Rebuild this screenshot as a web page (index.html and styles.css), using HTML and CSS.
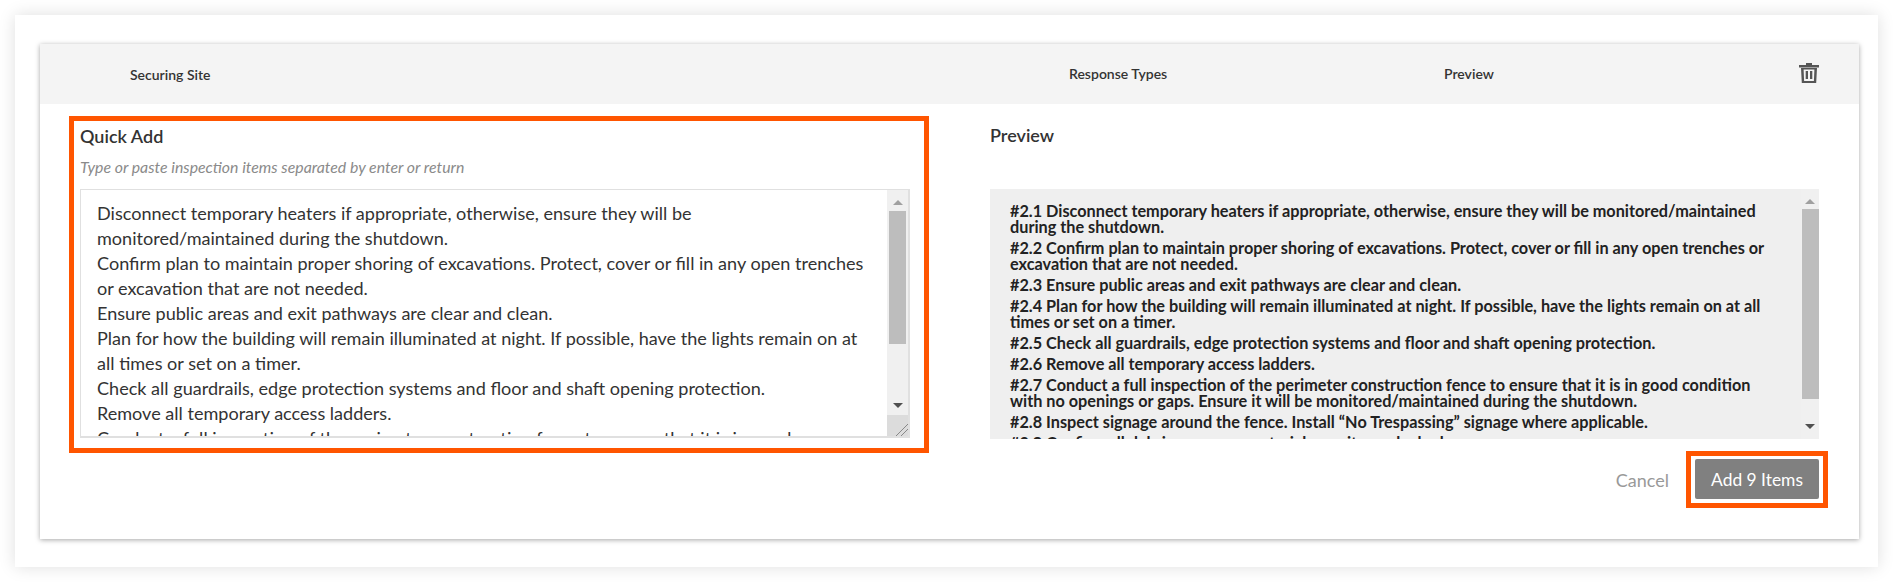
FILE: index.html
```html
<!DOCTYPE html>
<html lang="en">
<head>
<meta charset="utf-8">
<title>Quick Add</title>
<link rel="stylesheet" href="styles.css">
</head>
<body>
<main class="sheet">
  <section class="card">
    <header class="card-head">
      <span class="head-name">Securing Site</span>
      <span class="head-types">Response Types</span>
      <span class="head-preview">Preview</span>
      <svg class="trash" viewBox="0 0 20 20" aria-hidden="true">
        <path fill-rule="evenodd" d="M7 0h6v2h7v2.500H0V2h7zM2 5h16l-.8 15H2.800zM4.600 6.500l.5 11.500h9.800l.5-11.500z"/>
        <rect x="6.700" y="8" width="2.300" height="8"/>
        <rect x="11" y="8" width="2.300" height="8"/>
      </svg>
    </header>
    <div class="card-body">
      <div class="col-left">
        <div class="callout">
          <h2 class="title">Quick Add</h2>
          <p class="hint">Type or paste inspection items separated by enter or return</p>
          <div class="field">
            <div class="field-text">
              <p>Disconnect temporary heaters if appropriate, otherwise, ensure they will be monitored/maintained during the shutdown.</p>
              <p>Confirm plan to maintain proper shoring of excavations. Protect, cover or fill in any open trenches or excavation that are not needed.</p>
              <p>Ensure public areas and exit pathways are clear and clean.</p>
              <p>Plan for how the building will remain illuminated at night. If possible, have the lights remain on at all times or set on a timer.</p>
              <p>Check all guardrails, edge protection systems and floor and shaft opening protection.</p>
              <p>Remove all temporary access ladders.</p>
              <p>Conduct a full inspection of the perimeter construction fence to ensure that it is in good condition with no openings or gaps.</p>
            </div>
            <div class="scroll scroll-field">
              <span class="arrow-up"></span>
              <span class="thumb thumb-field"></span>
              <span class="arrow-down"></span>
            </div>
            <div class="resizer"></div>
          </div>
        </div>
      </div>
      <div class="col-right">
        <h2 class="title title-right">Preview</h2>
        <div class="preview">
          <div class="preview-text">
            <p>#2.1 Disconnect temporary heaters if appropriate, otherwise, ensure they will be monitored/maintained during the shutdown.</p>
            <p>#2.2 Confirm plan to maintain proper shoring of excavations. Protect, cover or fill in any open trenches or excavation that are not needed.</p>
            <p>#2.3 Ensure public areas and exit pathways are clear and clean.</p>
            <p>#2.4 Plan for how the building will remain illuminated at night. If possible, have the lights remain on at all times or set on a timer.</p>
            <p>#2.5 Check all guardrails, edge protection systems and floor and shaft opening protection.</p>
            <p>#2.6 Remove all temporary access ladders.</p>
            <p>#2.7 Conduct a full inspection of the perimeter construction fence to ensure that it is in good condition with no openings or gaps. Ensure it will be monitored/maintained during the shutdown.</p>
            <p>#2.8 Inspect signage around the fence. Install “No Trespassing” signage where applicable.</p>
            <p>#2.9 Confirm all debris or excess materials on site are locked.</p>
          </div>
          <div class="scroll scroll-preview">
            <span class="arrow-up"></span>
            <span class="thumb thumb-preview"></span>
            <span class="arrow-down"></span>
          </div>
        </div>
        <div class="actions">
          <span class="cancel">Cancel</span>
          <div class="callout-btn"><button class="add" type="button">Add 9 Items</button></div>
        </div>
      </div>
    </div>
  </section>
</main>
</body>
</html>
```
FILE: styles.css
```css
* { box-sizing: border-box; }
html, body { margin: 0; background: #fff; }
body {
  width: 1893px;
  height: 582px;
  padding: 15px;
  overflow: hidden;
  font-family: Lato, "Liberation Sans", sans-serif;
  color: #222;
}
.sheet {
  width: 1863px;
  height: 552px;
  padding: 29px 19px 0 25px;
  background: #fff;
  box-shadow: 0 0 16px rgba(0, 0, 0, .13);
}
.card {
  width: 1819px;
  height: 495px;
  background: #fff;
  box-shadow: 0 1px 5px rgba(0, 0, 0, .35);
}
.card-head {
  display: grid;
  grid-template-columns: 939px 375px 355px 20px;
  align-items: center;
  height: 60px;
  padding-left: 90px;
  background: #f4f4f4;
  font-size: 14px;
  font-weight: 600;
  color: #333;
}
.head-types, .head-preview { margin-top: -1px; }
.trash { width: 20px; height: 20px; fill: #555; margin-top: -2px; }
.card-body { display: flex; }
.col-left { width: 950px; padding: 12px 0 0 29px; }
.callout {
  width: 860px;
  height: 337px;
  padding: 0 0 0 6px;
  border: 5px solid #ff5500;
}
.title {
  margin: 0;
  padding-top: 4px;
  font-size: 18px;
  line-height: 22px;
  font-weight: 600;
  color: #333;
}
.hint {
  margin: 10px 0 12px;
  font-size: 15.85px;
  line-height: 20px;
  font-style: italic;
  color: #8a8a8a;
}
.field {
  position: relative;
  display: flex;
  width: 830px;
  height: 249px;
  border: 2px solid #e0e0e0;
  border-width: 1px 2px 2px 1px;
  overflow: hidden;
}
.field-text {
  flex: 1;
  padding: 11px 20px 0 16px;
  font-size: 18.07px;
  line-height: 25px;
  color: #333;
  overflow: hidden;
}
.field-text p { margin: 0; }
.scroll {
  display: flex;
  flex-direction: column;
  align-items: center;
  background: #f0f0f0;
}
.scroll-field { width: 21px; }
.scroll-preview { width: 18px; }
.thumb { display: block; background: #bdbdbd; width: 17px; }
.thumb-field { height: 133px; margin-top: 6px; }
.thumb-preview { height: 190px; margin-top: 5px; }
.arrow-up, .arrow-down {
  display: block;
  width: 0;
  height: 0;
  border-left: 5px solid transparent;
  border-right: 5px solid transparent;
}
.arrow-up { border-bottom: 5px solid #a0a0a0; margin-top: 10px; }
.arrow-down { border-top: 5px solid #505050; margin-top: 59px; }
.scroll-preview .arrow-down { margin-top: 25px; }
.resizer {
  position: absolute;
  right: 0;
  bottom: 0;
  width: 21px;
  height: 21px;
  background-color: #dcdcdc;
  background-image: linear-gradient(135deg, transparent 70%, #888 70%, #888 73%, transparent 73%, transparent 82%, #888 82%, #888 85%, transparent 85%);
}
.col-right { width: 829px; padding-top: 20px; }
.title-right { padding-top: 0; }
.preview {
  display: flex;
  width: 829px;
  height: 250px;
  margin-top: 43px;
  background: #efefef;
  overflow: hidden;
}
.preview-text {
  flex: 1;
  padding: 14px 30px 0 20px;
  font-size: 16.25px;
  line-height: 16px;
  font-weight: 700;
  color: #222;
  overflow: hidden;
}
.preview-text p { margin: 0 0 5px; }
.actions {
  display: flex;
  align-items: center;
  justify-content: flex-end;
  margin: 12px -9px 0 0;
  gap: 17px;
}
.cancel { font-size: 18px; color: #999; }
.callout-btn {
  width: 142px;
  height: 57px;
  padding: 3px 4px;
  border: 5px solid #ff5500;
}
.add {
  display: block;
  width: 124px;
  height: 40px;
  padding: 0;
  border: 0;
  border-radius: 2px;
  background: #808080;
  color: #fff;
  font-family: inherit;
  font-size: 17.4px;
}
```
